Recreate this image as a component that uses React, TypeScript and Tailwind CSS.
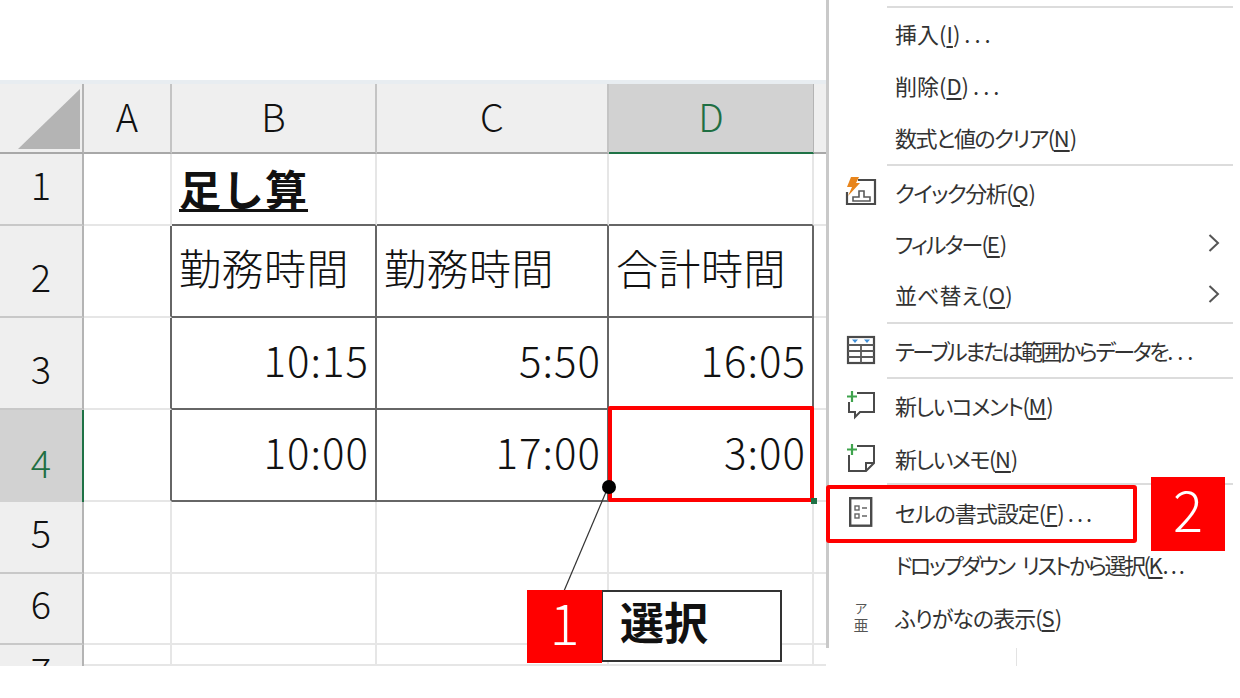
const font = "font-['Noto_Sans_CJK_JP','Noto_Sans',sans-serif]"

const GRID = 'border-[#e6e6e6]'
const DARK = 'border-[#666666]'

const rows = [
  { n: '1', cells: ['', '', '', ''], title: true },
  { n: '2', cells: ['', '勤務時間', '勤務時間', '合計時間'], table: true },
  { n: '3', cells: ['', '10:15', '5:50', '16:05'], table: true, right: true },
  { n: '4', cells: ['', '10:00', '17:00', '3:00'], table: true, right: true, selected: true },
  { n: '5', cells: ['', '', '', ''] },
  { n: '6', cells: ['', '', '', ''] },
  { n: '7', cells: ['', '', '', ''], clip: true },
]

function Corner() {
  return (
    <div className="bg-[#efefef] border-r-2 border-b-2 border-r-[#b4b4b4] border-b-[#a8a8a8] flex items-end justify-end pr-[2px] pb-[3px]">
      <svg width="62" height="60" viewBox="0 0 62 60">
        <path d="M62 0V60H0Z" fill="#b4b4b4" />
      </svg>
    </div>
  )
}

function ColHead({ label, active }: { label: string; active?: boolean }) {
  return (
    <div
      className={
        active
          ? 'bg-[#d2d2d2] border-r border-b-2 border-r-[#b4b4b4] border-b-[#1f7246] text-[#1f6f43] flex items-center justify-center pb-[4px] text-[38px] font-light leading-none'
          : 'bg-[#efefef] border-r-2 border-b-2 border-r-[#c4c4c4] border-b-[#a8a8a8] text-[#111] flex items-center justify-center pb-[4px] text-[38px] font-light leading-none'
      }
    >
      {label}
    </div>
  )
}

function RowHead({ label, active, clip }: { label: string; active?: boolean; clip?: boolean }) {
  if (clip) {
    return (
      <div className="bg-[#efefef] border-r-2 border-r-[#b4b4b4] overflow-hidden text-[38px] font-light leading-none text-[#111] flex justify-center pt-[6px]">
        {label}
      </div>
    )
  }
  return (
    <div
      className={
        active
          ? 'bg-[#d2d2d2] border-r-2 border-r-[#1f7246] text-[#1f6f43] flex items-end justify-center pb-[21px] text-[38px] font-light leading-none'
          : 'bg-[#efefef] border-r-2 border-b-2 border-r-[#b4b4b4] border-b-[#c8c8c8] text-[#111] flex items-end justify-center pb-[21px] text-[38px] font-light leading-none'
      }
    >
      {label}
    </div>
  )
}

function Cell({ text, className, right }: { text: string; className: string; right?: boolean }) {
  return (
    <div
      className={`flex items-center pb-[9px] text-[42px] font-light leading-none text-[#111] border-r-2 border-b-2 ${
        right ? 'justify-end pr-[6px] tracking-[1px]' : 'justify-start pl-[7px] tracking-[0.5px]'
      } ${className}`}
    >
      {text}
    </div>
  )
}

function Sheet() {
  return (
    <div className="w-[826px] h-[586px] mt-[80px] pt-[4px] bg-[#e8edf1]">
      <div className="bg-white grid grid-cols-[84px_88px_205px_232px_205px_12px] grid-rows-[70px_72px_92px_92px_92px_72px_71px_21px] h-[582px]">
        <Corner />
        <ColHead label="A" />
        <ColHead label="B" />
        <ColHead label="C" />
        <ColHead label="D" active />
        <div className="bg-[#efefef] border-b-2 border-b-[#a8a8a8]" />
        {rows.map((r) => (
          <div key={r.n} className="contents">
            <RowHead label={r.n} active={r.selected} clip={r.clip} />
            <div className={`border-r-2 border-b-2 ${r.table ? 'border-r-[#666666]' : 'border-r-[#e6e6e6]'} border-b-[#e6e6e6]`} />
            {r.cells.slice(1).map((c, i) => (
              <div key={i} className="contents">
                {r.title && i === 0 ? (
                  <div className="flex items-center pl-[7px] pb-[2px] border-r-2 border-b-2 border-b-[#666666] border-r-[#e6e6e6]">
                    <span className="text-[42px] tracking-[1px] leading-none font-bold text-[#111] underline underline-offset-[3px] decoration-[3px]">
                      足し算
                    </span>
                  </div>
                ) : (
                  <Cell
                    text={c}
                    right={r.right}
                    className={r.table ? DARK : r.title ? 'border-b-[#666666] border-r-[#e6e6e6]' : GRID}
                  />
                )}
              </div>
            ))}
            <div className={`border-b-2 ${GRID}`} />
          </div>
        ))}
      </div>
    </div>
  )
}

function QuickIcon() {
  return (
    <svg width="32" height="30" viewBox="0 0 32 30" fill="none">
      <path d="M13 3H30V27H2V15" stroke="#4a4a4a" strokeWidth="2.2" />
      <path d="M8 20H14V14H19V20H25V24H8Z" stroke="#5a5a5a" strokeWidth="1.6" />
      <path d="M6 0H14L11 6H15L3 19L7 10H2Z" fill="#e8851c" />
    </svg>
  )
}

function TableIcon() {
  return (
    <svg width="30" height="30" viewBox="0 0 30 30" fill="none">
      <rect x="2" y="2" width="26" height="26" stroke="#4a4a4a" strokeWidth="2.2" />
      <path d="M2 10H28M2 16H28M2 22H28M15 10V28" stroke="#5a5a5a" strokeWidth="1.8" />
      <path d="M6 4.5H12L9 8ZM18 4.5H24L21 8Z" fill="#3f8fd8" />
    </svg>
  )
}

function CommentIcon() {
  return (
    <svg width="30" height="30" viewBox="0 0 30 30" fill="none">
      <path d="M11 3H28V22H14L9 27V22H3V12" stroke="#4a4a4a" strokeWidth="2" />
      <path d="M6 1V12M1 6.5H11" stroke="#3fa34d" strokeWidth="2.2" />
    </svg>
  )
}

function NoteIcon() {
  return (
    <svg width="30" height="30" viewBox="0 0 30 30" fill="none">
      <path d="M11 3H28V20L20 28H3V12" stroke="#4a4a4a" strokeWidth="2" />
      <path d="M28 20H20V28" stroke="#4a4a4a" strokeWidth="2" />
      <path d="M6 1V12M1 6.5H11" stroke="#3fa34d" strokeWidth="2.2" />
    </svg>
  )
}

function FormatIcon() {
  return (
    <svg width="24" height="30" viewBox="0 0 24 30" fill="none">
      <rect x="1.2" y="1.2" width="21" height="27.5" stroke="#4a4a4a" strokeWidth="2.4" />
      <rect x="6" y="9" width="4" height="4" stroke="#666" strokeWidth="1.4" />
      <rect x="6" y="17" width="4" height="4" stroke="#666" strokeWidth="1.4" />
      <path d="M13 11H18M13 19H18" stroke="#666" strokeWidth="1.5" />
    </svg>
  )
}

function FuriganaIcon() {
  return (
    <div className="flex flex-col items-center gap-[2px] text-[#555]">
      <span className="text-[13px] leading-[14px]">ア</span>
      <span className="text-[15px] leading-[16px]">亜</span>
    </div>
  )
}

function Chevron() {
  return (
    <svg width="14" height="20" viewBox="0 0 14 20" fill="none">
      <path d="M2.5 2L11 10L2.5 18" stroke="#555" strokeWidth="2" />
    </svg>
  )
}

const menu = [
  { h: 54, text: '挿入(', key: 'I', end: ')...', track: 'tracking-normal', dots: 'tracking-[4px]' },
  { h: 50, text: '削除(', key: 'D', end: ')...', track: 'tracking-normal', dots: 'tracking-[4px]' },
  { h: 54, text: '数式と値のクリア(', key: 'N', end: ')', track: 'tracking-[-1.5px]', sep: true },
  { h: 56, text: 'クイック分析(', key: 'Q', end: ')', track: 'tracking-[-1.5px]', icon: <QuickIcon /> },
  { h: 46, text: 'フィルター(', key: 'E', end: ')', track: 'tracking-[-2px]', sub: true },
  { h: 56, text: '並べ替え(', key: 'O', end: ')', track: 'tracking-normal', sub: true, sep: true },
  { h: 55, text: 'テーブルまたは範囲からデータを', end: '...', track: 'tracking-[-2.5px]', dots: 'tracking-[4px]', icon: <TableIcon />, sep: true },
  { h: 55, text: '新しいコメント(', key: 'M', end: ')', track: 'tracking-[-1.5px]', icon: <CommentIcon /> },
  { h: 51, text: '新しいメモ(', key: 'N', end: ')', track: 'tracking-[-1.5px]', icon: <NoteIcon />, sep: true },
  { h: 57, text: 'セルの書式設定(', key: 'F', end: ')...', track: 'tracking-[-1px]', dots: 'tracking-[3px]', icon: <FormatIcon /> },
  { h: 48, text: 'ドロップダウン リストから選択(', key: 'K', end: '...', track: "tracking-[-2.5px] [word-spacing:6px]", dots: 'tracking-[2px]' },
  { h: 57, text: 'ふりがなの表示(', key: 'S', end: ')', track: 'tracking-[-1px]', icon: <FuriganaIcon /> },
]

function ContextMenu() {
  return (
    <div className="absolute left-[826px] top-0 w-[414px] h-[648px] bg-white border-l-[3px] border-l-[#c9c9c9] pt-[6px]">
      <div className="h-0.5 bg-[#dcdcdc] ml-[58px] mr-[7px]" />
      {menu.map((m) => (
        <div key={m.text} style={{ height: m.h }}>
          <div className="h-full pb-[4px] flex items-center text-[22px] leading-none text-[#333] whitespace-nowrap relative">
            <div className="w-[66px] pr-[2px] flex justify-center shrink-0">{m.icon}</div>
            <span className={`[font-feature-settings:'palt'] ${m.track}`}>
              {m.text}
              {m.key && <span className="underline underline-offset-[3px] tracking-normal">{m.key}</span>}
              <span className={m.dots ?? 'tracking-normal'}>{m.end}</span>
            </span>
            {m.sub && (
              <div className="absolute right-[19px] top-[50%] -translate-y-[calc(50%+2px)]">
                <Chevron />
              </div>
            )}
          </div>
          {m.sep && <div className="h-0.5 -mt-0.5 bg-[#dcdcdc] ml-[58px] mr-[7px]" />}
        </div>
      ))}
    </div>
  )
}

function Callouts() {
  return (
    <>
      <div className="absolute left-[608px] top-[406px] w-[206px] h-[96px] border-4 border-[#ff0000] rounded-[2px]" />
      <div className="absolute left-[811px] top-[498px] w-[6px] h-[6px] bg-[#1f7246]" />
      <div className="absolute left-[826px] top-[485px] w-[311px] h-[58px] border-4 border-[#ff0000] rounded-[3px]" />
      <div className="absolute left-[1151px] top-[477px] w-[74px] h-[74px] pb-[12px] bg-[#ff0000] text-white text-[56px] font-light leading-none flex items-center justify-center">
        2
      </div>
      <svg className="absolute left-[556px] top-[478px]" width="64" height="114" viewBox="0 0 64 114" fill="none">
        <path d="M50 14L8 113" stroke="#333" strokeWidth="1.2" />
        <circle cx="53" cy="9" r="7" fill="#000" />
      </svg>
      <div className="absolute left-[527px] top-[590px] flex h-[73px]">
        <div className="w-[75px] h-[73px] pb-[12px] bg-[#ff0000] text-white text-[56px] font-light leading-none flex items-center justify-center">
          1
        </div>
        <div className="w-[180px] h-[72px] pb-[10px] border-2 border-l-[1px] border-[#333] bg-white flex items-center pl-[17px] text-[44px] font-bold text-[#111] leading-none">
          選択
        </div>
      </div>
      <div className="absolute left-[1016px] top-[648px] w-px h-[18px] bg-[#e3e3e3]" />
    </>
  )
}

export default function App() {
  return (
    <div className={`relative w-[1240px] h-[698px] overflow-hidden bg-white flex flex-col ${font}`}>
      <Sheet />
      <ContextMenu />
      <Callouts />
    </div>
  )
}
